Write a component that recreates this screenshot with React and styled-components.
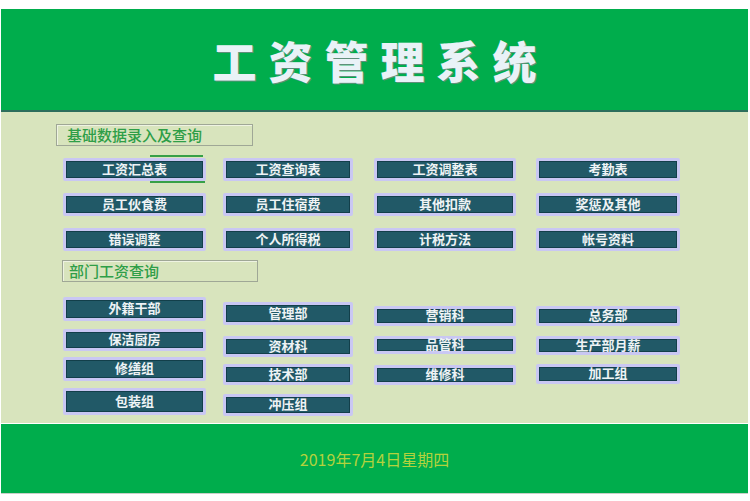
import React from 'react';
import styled, { createGlobalStyle } from 'styled-components';

const GlobalStyle = createGlobalStyle`
  html, body {
    margin: 0;
    padding: 0;
    background: #ffffff;
  }
  body {
    font-family: "Noto Sans CJK SC", "Noto Sans", sans-serif;
  }
`;

// column placement shared by both sections (ml = gap from previous column)
const columns = [
  { ml: 62, w: 143 },
  { ml: 17, w: 130 },
  { ml: 21, w: 142 },
  { ml: 20, w: 144 },
];

const basicRows = [
  ['工资汇总表', '员工伙食费', '错误调整'],
  ['工资查询表', '员工住宿费', '个人所得税'],
  ['工资调整表', '其他扣款', '计税方法'],
  ['考勤表', '奖惩及其他', '帐号资料'],
];

const deptCols = [
  {
    pt: 15,
    items: [
      { label: '外籍干部', h: 24, mt: 0 },
      { label: '保洁厨房', h: 22, mt: 8 },
      { label: '修缮组', h: 24, mt: 6 },
      { label: '包装组', h: 27, mt: 7 },
    ],
  },
  {
    pt: 20,
    items: [
      { label: '管理部', h: 23, mt: 0 },
      { label: '资材科', h: 21, mt: 11 },
      { label: '技术部', h: 21, mt: 7 },
      { label: '冲压组', h: 22, mt: 9 },
    ],
  },
  {
    pt: 24,
    items: [
      { label: '营销科', h: 20, mt: 0 },
      { label: '品管科', h: 18, mt: 10 },
      { label: '维修科', h: 20, mt: 11 },
    ],
  },
  {
    pt: 24,
    items: [
      { label: '总务部', h: 20, mt: 0 },
      { label: '生产部月薪', h: 19, mt: 10 },
      { label: '加工组', h: 20, mt: 9 },
    ],
  },
];

function App() {
  return (
    <>
      <GlobalStyle />
      <Frame>
        <Header>
          <Title>工资管理系统</Title>
        </Header>

        <Body>
          <SectionLabel $ml={55} $pl={10} $w={197}>
            基础数据录入及查询
          </SectionLabel>
          <Columns $mt={12}>
            {basicRows.map((col, i) => (
              <Column key={i} $w={columns[i].w} $ml={columns[i].ml} $gap={12}>
                {col.map((label, j) => (
                  <NavButton key={label} $h={23} $focus={i === 0 && j === 0}>
                    <span>{label}</span>
                  </NavButton>
                ))}
              </Column>
            ))}
          </Columns>

          <SectionLabel $ml={61} $pl={6} $w={196} $mt={9}>
            部门工资查询
          </SectionLabel>
          <Columns>
            {deptCols.map((col, i) => (
              <Column key={i} $w={columns[i].w} $ml={columns[i].ml} $pt={col.pt}>
                {col.items.map((it) => (
                  <NavButton key={it.label} $h={it.h} $mt={it.mt}>
                    <span>{it.label}</span>
                  </NavButton>
                ))}
              </Column>
            ))}
          </Columns>
        </Body>

        <Footer>
          <DateText>2019年7月4日星期四</DateText>
        </Footer>
      </Frame>
    </>
  );
}

const Frame = styled.div`
  width: 747px;
  margin-left: 1px;
  padding-top: 9px;
  display: flex;
  flex-direction: column;
`;

const Header = styled.div`
  height: 101px;
  background: #00ad4c;
  border-bottom: 2px solid #2c6e5c;
  display: flex;
  align-items: center;
  justify-content: center;
`;

const Title = styled.h1`
  margin: 0 0 0 12px;
  font-family: "Noto Sans CJK SC", sans-serif;
  font-weight: 900;
  font-size: 44px;
  letter-spacing: 12px;
  color: #e9f2f7;
  text-shadow: 1px 1px 0 #5f8f7a;
  line-height: 1;
`;

const Body = styled.div`
  height: 311px;
  background: #d8e4bd;
  padding-top: 12px;
  box-sizing: border-box;
  display: flex;
  flex-direction: column;
`;

const SectionLabel = styled.div`
  width: ${(p) => p.$w}px;
  height: 22px;
  box-sizing: border-box;
  margin-left: ${(p) => p.$ml}px;
  margin-top: ${(p) => p.$mt || 0}px;
  padding-left: ${(p) => p.$pl}px;
  border: 1px solid #9fa796;
  box-shadow: inset 1px 1px 0 #eef3e2;
  color: #2f9e48;
  font-size: 15px;
  line-height: 20px;
  font-weight: 500;
`;

const Columns = styled.div`
  display: flex;
  align-items: flex-start;
  margin-top: ${(p) => p.$mt || 0}px;
`;

const Column = styled.div`
  width: ${(p) => p.$w}px;
  margin-left: ${(p) => p.$ml}px;
  padding-top: ${(p) => p.$pt || 0}px;
  display: flex;
  flex-direction: column;
  gap: ${(p) => p.$gap || 0}px;
`;

const NavButton = styled.div`
  position: relative;
  height: ${(p) => p.$h}px;
  margin-top: ${(p) => p.$mt || 0}px;
  box-sizing: border-box;
  border: 3px solid #c9c7f3;
  background: #215967;
  box-shadow: inset 0 0 0 1px #123f4a;
  border-radius: 2px;
  color: #eef3f5;
  font-size: 13px;
  font-weight: 700;
  display: flex;
  align-items: center;
  justify-content: center;
  cursor: pointer;

  span {
    display: block;
    line-height: 13px;
    height: 13px;
    margin-top: -3px;
  }

  ${(p) =>
    p.$focus &&
    `
    &::before {
      content: '';
      position: absolute;
      left: 84px;
      right: 0;
      top: -6px;
      height: 2px;
      background: #37a047;
    }
    &::after {
      content: '';
      position: absolute;
      left: 84px;
      right: -2px;
      bottom: -5px;
      height: 2px;
      background: #37a047;
      border-right: 3px solid #37a047;
    }
  `}
`;

const Footer = styled.div`
  height: 69px;
  margin-top: 1px;
  background: #00ad4c;
  border-bottom: 1px solid #c9cfc9;
  display: flex;
  align-items: center;
  justify-content: center;
`;

const DateText = styled.span`
  font-size: 16px;
  color: #b3d23d;
  font-family: "Noto Sans CJK SC", sans-serif;
`;

export default App;
